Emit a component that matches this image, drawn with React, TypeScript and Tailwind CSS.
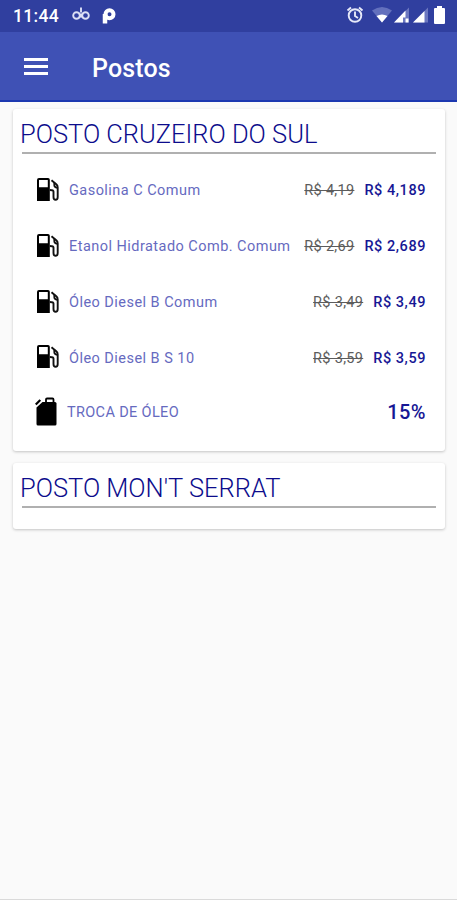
type Fuel = { name: string; oldPrice: string; price: string };

const fuels: Fuel[] = [
  { name: "Gasolina C Comum", oldPrice: "R$ 4,19", price: "R$ 4,189" },
  { name: "Etanol Hidratado Comb. Comum", oldPrice: "R$ 2,69", price: "R$ 2,689" },
  { name: "Óleo Diesel B Comum", oldPrice: "R$ 3,49", price: "R$ 3,49" },
  { name: "Óleo Diesel B S 10", oldPrice: "R$ 3,59", price: "R$ 3,59" },
];

function PumpIcon() {
  return (
    <svg className="h-[23px] w-[22px] shrink-0" viewBox="0 0 22 23">
      <path fillRule="evenodd" d="M2 0h9q1.800 0 1.800 1.800V23H0V2q0-2 2-2zM2 2v7.200h8.800V2z" />
      <path
        d="M14.500 2.300l5 4.200q1.200 1 1.200 3v9.500q0 2.800-2.100 2.800t-2.100-2.800v-5.500q0-1.500-3.700-1.500"
        fill="none"
        stroke="#111"
        strokeWidth="1.900"
      />
      <path d="M17.300 4.500v2.800q0 2 3 2.600" fill="none" stroke="#111" strokeWidth="1.800" />
    </svg>
  );
}

function CanisterIcon() {
  return (
    <svg className="h-[29px] w-[22px] shrink-0" viewBox="0 0 22 29">
      <path d="M7.500 5H20q1.500 0 1.500 1.500V27q0 1.500-1.500 1.500H3Q1.500 28.500 1.500 27V10.500z" />
      <path d="M0.800 7.500l4.500-4.500" fill="none" stroke="#000" strokeWidth="2.200" />
      <path d="M11 5.500V2.500q0-1 1-1h5.500q1 0 1 1v3" fill="none" stroke="#000" strokeWidth="1.800" />
    </svg>
  );
}

function StatusBar() {
  return (
    <div className="flex h-8 shrink-0 items-center bg-[#303f9f] pl-[13px] pr-[12px] text-white">
      <span className="w-[59px] text-[17.5px] font-medium leading-8 tracking-[0.35px]">11:44</span>
      <svg className="-mt-[4px] h-4 w-[18px]" viewBox="0 0 18 16" fill="none" stroke="#dce0f5" strokeWidth="1.900">
        <circle cx="4.500" cy="9.500" r="3.300" />
        <circle cx="13.500" cy="9.500" r="3.300" />
        <path d="M7 12l4-5M7 7l4 5M9 1.500v5" />
      </svg>
      <svg className="ml-[12px] h-4 w-[14px]" viewBox="0 0 14 16" fill="none" stroke="#fff">
        <path d="M3 15.500V6" strokeWidth="4.500" />
        <circle cx="7.500" cy="6.300" r="4" strokeWidth="4" />
      </svg>
      <svg className="-mt-[3px] ml-auto h-[18px] w-[18px]" viewBox="0 0 18 18" fill="none" stroke="#e6e9f8" strokeWidth="1.900">
        <circle cx="9" cy="9.500" r="6.300" />
        <path d="M9 5.500V10l3 2M1.500 4.500L5 1.500M16.500 4.500L13 1.500" />
      </svg>
      <svg className="-mt-[2px] ml-[8px] h-4 w-5" viewBox="0 0 20 16">
        <path d="M0 3.500Q10-3.500 20 3.500L10 15.500z" fill="#6370bd" />
        <path d="M4.500 9Q10 6 15.500 9L10 15.500z" fill="#fff" />
      </svg>
      <svg className="-mt-[2px] ml-[2px] h-4 w-[15px]" viewBox="0 0 15 16">
        <path d="M0 15.500L15 0.500v15z" fill="#6b77c0" />
        <path d="M0 15.500L11.500 3.500v7h-2.500v5z" fill="#fff" />
        <path d="M11.500 11.500h3v4h-3z" fill="#fff" />
      </svg>
      <svg className="-mt-[2px] ml-[4px] h-4 w-[15px]" viewBox="0 0 15 16">
        <path d="M0 15.500L15 0.500v15z" fill="#6b77c0" />
        <path d="M0 15.500L11.500 4v11.500z" fill="#fff" />
      </svg>
      <svg className="-mt-[2px] ml-[6px] h-[18px] w-[11px]" viewBox="0 0 11 18">
        <path d="M3 0h5v2h2q1 0 1 1v14q0 1-1 1H1q-1 0-1-1V3q0-1 1-1h2z" fill="#fff" />
      </svg>
    </div>
  );
}

function CardTitle({ children }: { children: string }) {
  return (
    <h2 className="ml-[7px] mr-[9px] whitespace-nowrap text-[25.5px] font-light leading-[33px] tracking-[-0.02px] text-[#0c0c8c]">
      <span className="block h-[43px] pt-[9px]">{children}</span>
      <span className="ml-[2px] block h-[2px] bg-[#b0b0b0]" />
    </h2>
  );
}

export default function App() {
  return (
    <div className="flex h-[900px] w-[457px] flex-col overflow-hidden border-b border-[#dadada] bg-[#fafafa] font-['Roboto',sans-serif]">
      <StatusBar />
      <header className="flex h-[70px] shrink-0 items-center border-b-2 border-[#1c38b0] bg-[#3f51b5] pl-6 text-white">
        <div className="mt-px flex w-6 flex-col gap-[4px]">
          <span className="h-[3px] bg-white" />
          <span className="h-[3px] bg-white" />
          <span className="h-[3px] bg-white" />
        </div>
        <h1 className="ml-[44px] pt-[6px] text-[25px] font-medium leading-8 tracking-[0.15px]">Postos</h1>
      </header>
      <main className="flex flex-col gap-3 pl-[13px] pr-[12px] pt-[7px]">
        <section className="h-[342px] rounded-[3px] bg-white shadow-[0_1px_3px_#00000038]">
          <CardTitle>POSTO CRUZEIRO DO SUL</CardTitle>
          <ul className="pl-[24px] pr-[19px] pt-[8px]">
            {fuels.map((fuel) => (
              <li key={fuel.name} className="flex h-[55.7px] items-center whitespace-nowrap text-[14.5px]">
                <PumpIcon />
                <span className="ml-[10px] pt-[3px] tracking-[0.46px] text-[#666abf]">{fuel.name}</span>
                <span className="ml-auto pt-[3px] tracking-[0.3px] text-[#5c5c5c] line-through">{fuel.oldPrice}</span>
                <span className="ml-[10px] pt-[3px] font-medium tracking-[0.55px] text-[#171795]">{fuel.price}</span>
              </li>
            ))}
            <li className="-ml-[2px] flex h-[54px] items-center">
              <CanisterIcon />
              <span className="ml-[10px] pt-[2px] text-[14.5px] tracking-[0.35px] text-[#666abf]">TROCA DE ÓLEO</span>
              <span className="ml-auto pt-px text-[20px] font-medium tracking-[0.4px] text-[#171795]">15%</span>
            </li>
          </ul>
        </section>
        <section className="h-[66px] rounded-[3px] bg-white shadow-[0_1px_3px_#00000038]">
          <CardTitle>POSTO MON'T SERRAT</CardTitle>
        </section>
      </main>
    </div>
  );
}
